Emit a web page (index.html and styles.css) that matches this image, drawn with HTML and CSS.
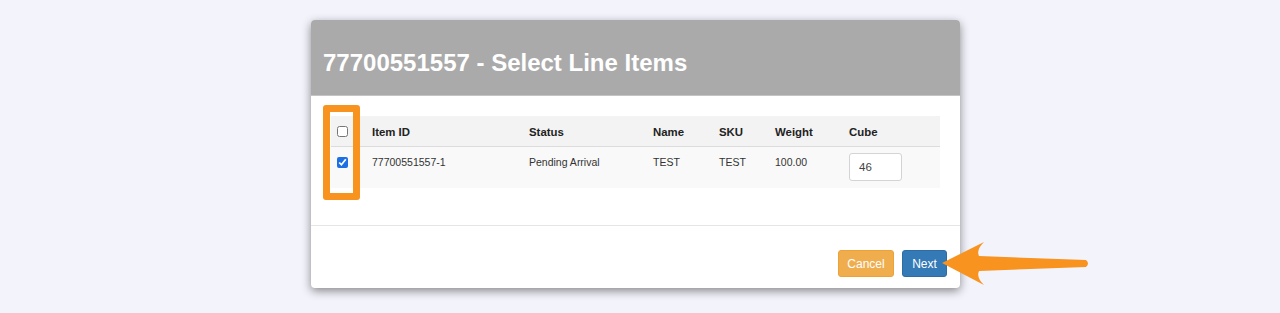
FILE: index.html
```html
<!DOCTYPE html>
<html>
<head>
<meta charset="utf-8">
<link rel="stylesheet" href="styles.css">
</head>
<body>
<div class="stage">
  <div class="modal">
    <div class="modal-header">
      <h2 class="modal-title">77700551557 - Select Line Items</h2>
    </div>
    <div class="modal-body">
      <table class="items">
        <colgroup>
          <col class="c-check"><col class="c-id"><col class="c-status"><col class="c-name"><col class="c-sku"><col class="c-weight"><col class="c-cube">
        </colgroup>
        <thead>
          <tr>
            <th><input type="checkbox" class="chk chk-head"></th>
            <th>Item ID</th>
            <th>Status</th>
            <th>Name</th>
            <th>SKU</th>
            <th>Weight</th>
            <th>Cube</th>
          </tr>
        </thead>
        <tbody>
          <tr>
            <td><input type="checkbox" class="chk chk-row" checked></td>
            <td>77700551557-1</td>
            <td>Pending Arrival</td>
            <td>TEST</td>
            <td>TEST</td>
            <td>100.00</td>
            <td><input type="text" class="cube-input" value="46"></td>
          </tr>
        </tbody>
      </table>
      <div class="highlight"></div>
    </div>
    <div class="modal-footer">
      <button class="btn btn-cancel">Cancel</button>
      <button class="btn btn-next">Next</button>
    </div>
  </div>
  <svg class="arrow" width="1280" height="313" viewBox="0 0 1280 313">
    <path d="M942 263 L984 242 Q976 250 979 256 L1086 260 Q1090 263.5 1086 267 L979 271 Q976 277 984 285 Z" fill="#f7931e"/>
  </svg>
</div>
</body>
</html>
```
FILE: styles.css
```css
html, body {
  margin: 0;
  padding: 0;
}
body {
  background: #f3f3fb;
  font-family: "Liberation Sans", Arial, Helvetica, sans-serif;
  color: #333;
  width: 1280px;
  height: 313px;
  overflow: hidden;
}
.stage {
  position: relative;
  width: 1280px;
  height: 313px;
  padding-top: 20px;
  box-sizing: border-box;
}
.modal {
  margin-left: 311px;
  width: 649px;
  background: #fff;
  border-radius: 4px;
  box-shadow: 0 3px 10px rgba(0, 0, 0, 0.45);
  overflow: hidden;
}
.modal-header {
  background: #aaaaaa;
  padding: 31px 12px 20px;
  border-bottom: 1px solid #c4c4c4;
}
.modal-title {
  margin: 0;
  font-size: 24px;
  line-height: 24px;
  font-weight: bold;
  color: #fff;
}
.modal-body {
  position: relative;
  padding: 20px 20px 37px;
}
.items {
  width: 609px;
  border-collapse: collapse;
  table-layout: fixed;
  font-size: 10.5px;
  line-height: 15px;
}
.c-check { width: 35px; }
.c-id { width: 157px; }
.c-status { width: 124px; }
.c-name { width: 66px; }
.c-sku { width: 56px; }
.c-weight { width: 74px; }
.c-cube { width: 97px; }
.items th {
  background: #f3f3f3;
  text-align: left;
  font-weight: bold;
  font-size: 11.4px;
  color: #222;
  padding: 9px 6px 6px;
  border-bottom: 1px solid #dcdcdc;
  vertical-align: top;
}
.items td {
  background: #f9f9f9;
  padding: 8px 6px 7px;
  vertical-align: top;
  color: #333;
}
.chk {
  display: block;
  width: 11px;
  height: 11px;
  margin: 0;
  accent-color: #1d6fe6;
}
.chk-head { margin-top: 1px; }
.chk-row { margin-top: 2px; }
.cube-input {
  display: block;
  box-sizing: border-box;
  width: 53px;
  height: 28px;
  margin: -2px 0 0;
  padding: 0 9px;
  border: 1px solid #d4d4d4;
  border-radius: 3px;
  font-family: "Liberation Sans", Arial, sans-serif;
  font-size: 11.5px;
  color: #444;
  background: #fff;
}
.highlight {
  position: absolute;
  left: 12px;
  top: 9px;
  width: 37px;
  height: 95px;
  box-sizing: border-box;
  border: 7px solid #f7931e;
  border-radius: 3px;
}
.modal-footer {
  display: flex;
  justify-content: flex-end;
  gap: 8px;
  padding: 24px 13px 11px;
  border-top: 1px solid #e5e5e5;
}
.btn {
  height: 27px;
  box-sizing: border-box;
  padding: 0 6px;
  border-radius: 3px;
  font-family: "Liberation Sans", Arial, sans-serif;
  font-size: 12px;
  color: #fff;
  cursor: pointer;
}
.btn-cancel {
  width: 56px;
  background: #f0ad4e;
  border: 1px solid #eea236;
}
.btn-next {
  width: 45px;
  background: #337ab7;
  border: 1px solid #2e6da4;
}
.arrow {
  position: absolute;
  left: 0;
  top: 0;
  pointer-events: none;
}
```
